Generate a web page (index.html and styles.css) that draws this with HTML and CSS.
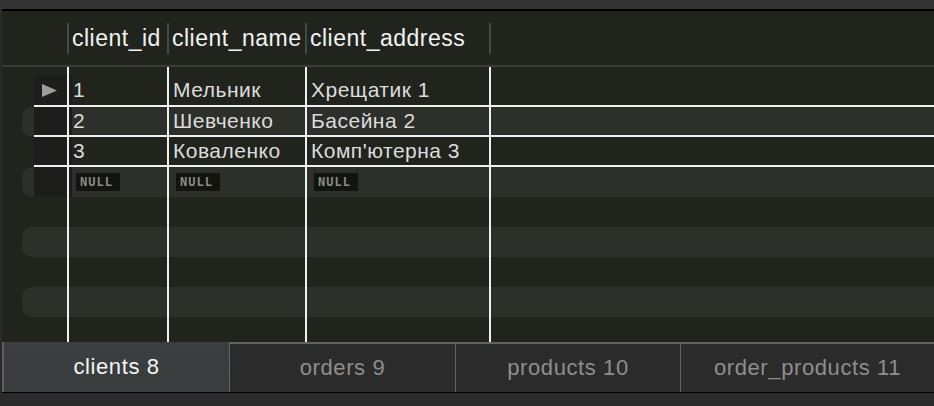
FILE: index.html
```html
<!DOCTYPE html>
<html lang="uk">
<head>
<meta charset="utf-8">
<title>clients</title>
<link rel="stylesheet" href="styles.css">
</head>
<body>
<div class="topbar"></div>
<div class="main">
  <div class="grid">
    <div class="head">
      <div class="hgut"></div>
      <div class="hind"></div>
      <div class="hc c1">client_id</div>
      <div class="hc c2">client_name</div>
      <div class="hc c3">client_address</div>
      <div class="hc rest"></div>
    </div>
    <div class="body">
      <div class="row spacer">
        <div class="gut"></div><div class="ind"></div>
        <div class="cell c1"></div><div class="cell c2"></div><div class="cell c3"></div><div class="cell rest"></div>
      </div>
      <div class="row first rec lined">
        <div class="gut"></div>
        <div class="ind"><svg class="arrow" width="15" height="13" viewBox="0 0 15 13"><path d="M0 0 L15 6.5 L0 13 Z" fill="#9d9d9d"/></svg></div>
        <div class="cell c1">1</div><div class="cell c2">Мельник</div><div class="cell c3">Хрещатик 1</div><div class="cell rest"></div>
      </div>
      <div class="row alt rec lined">
        <div class="gut"></div><div class="ind"></div>
        <div class="cell c1">2</div><div class="cell c2">Шевченко</div><div class="cell c3">Басейна 2</div><div class="cell rest"></div>
      </div>
      <div class="row rec lined">
        <div class="gut"></div><div class="ind"></div>
        <div class="cell c1">3</div><div class="cell c2">Коваленко</div><div class="cell c3">Комп'ютерна 3</div><div class="cell rest"></div>
      </div>
      <div class="row alt rec">
        <div class="gut"></div><div class="ind"></div>
        <div class="cell c1"><span class="null">NULL</span></div><div class="cell c2"><span class="null">NULL</span></div><div class="cell c3"><span class="null">NULL</span></div><div class="cell rest"></div>
      </div>
      <div class="row">
        <div class="gut"></div><div class="ind"></div>
        <div class="cell c1"></div><div class="cell c2"></div><div class="cell c3"></div><div class="cell rest"></div>
      </div>
      <div class="row alt">
        <div class="gut"></div><div class="ind"></div>
        <div class="cell c1"></div><div class="cell c2"></div><div class="cell c3"></div><div class="cell rest"></div>
      </div>
      <div class="row">
        <div class="gut"></div><div class="ind"></div>
        <div class="cell c1"></div><div class="cell c2"></div><div class="cell c3"></div><div class="cell rest"></div>
      </div>
      <div class="row alt">
        <div class="gut"></div><div class="ind"></div>
        <div class="cell c1"></div><div class="cell c2"></div><div class="cell c3"></div><div class="cell rest"></div>
      </div>
      <div class="row last">
        <div class="gut"></div><div class="ind"></div>
        <div class="cell c1"></div><div class="cell c2"></div><div class="cell c3"></div><div class="cell rest"></div>
      </div>
    </div>
  </div>
  <div class="tabs">
    <div class="tab active t1">clients 8</div>
    <div class="tab t2">orders 9</div>
    <div class="tab t3">products 10</div>
    <div class="tab t4">order_products 11</div>
  </div>
</div>
</body>
</html>
```

FILE: styles.css
```css
* { box-sizing: border-box; }
html, body { margin: 0; padding: 0; }
body {
  width: 934px;
  height: 406px;
  overflow: hidden;
  background: #2a2a2a;
  font-family: "Liberation Sans", Arial, sans-serif;
}
.topbar {
  height: 9px;
  background: #333333;
}
.main {
  margin-left: 2px;
  border-top: 2px solid #000;
  display: flex;
  flex-direction: column;
}
.grid {
  height: 331px;
  background: #20241d;
  display: flex;
  flex-direction: column;
}
.head {
  height: 56px;
  border-bottom: 2px solid #3a3d37;
  display: flex;
  align-items: flex-start;
}
.hgut { width: 32px; flex: none; }
.hind { width: 33px; flex: none; }
.hc {
  margin-top: 12px;
  height: 31px;
  line-height: 31px;
  border-left: 2px solid #464941;
  padding-left: 3px;
  color: #f2f2f2;
  font-size: 23px;
  letter-spacing: 0.5px;
  white-space: nowrap;
  flex: none;
}
.c1 { width: 100px; flex: none; }
.c2 { width: 138px; flex: none; }
.c3 { width: 184px; flex: none; }
.rest { flex: 1; }
.body {
  flex: 1;
  display: flex;
  flex-direction: column;
}
.row {
  margin-left: 20px;
  height: 30px;
  display: flex;
  flex: none;
}
.row.spacer { height: 8px; }
.row.first { height: 32px; }
.row.last { flex: 1; }
.row.alt {
  background: #2d2f2a;
  border-radius: 10px 0 0 10px;
}
.gut { width: 12px; flex: none; }
.ind {
  width: 33px;
  flex: none;
  display: flex;
  align-items: center;
  padding-left: 8px;
}
.cell {
  border-left: 2px solid #efefef;
  display: flex;
  align-items: center;
  padding-left: 4px;
  color: #dcdcdc;
  font-size: 21px;
  letter-spacing: 0.5px;
  white-space: nowrap;
}
.rest.cell { flex: 1; }
.rec .ind { background: #1d1e1b; }
.rec .c1 { background: linear-gradient(90deg, #1d1e1b 3px, transparent 3px); }
.lined .ind,
.lined .cell { border-bottom: 2px solid #efefef; }
.null {
  margin-left: 3px;
  display: inline-block;
  height: 18px;
  line-height: 18px;
  width: 44px;
  padding-left: 4px;
  background: #121410;
  color: #8a8c87;
  font-family: "DejaVu Sans Mono", monospace;
  font-weight: bold;
  font-size: 12px;
  letter-spacing: 1px;
}
.tabs {
  height: 51px;
  display: flex;
  border-bottom: 1px solid #000;
}
.tab {
  height: 50px;
  display: flex;
  align-items: center;
  justify-content: center;
  font-size: 22px;
  letter-spacing: 0.6px;
  color: #8e8e8e;
  background: #2b2b2b;
  border-top: 2px solid #63635f;
  border-left: 1px solid #63635f;
  white-space: nowrap;
  flex: none;
}
.tab.active {
  color: #f4f4f4;
  border-top: none;
  border-left: 2px solid #5f5f5b;
  background: linear-gradient(180deg, #3c3f41, #393c3d);
}
.t1 { width: 227px; }
.t2 { width: 226px; }
.t3 { width: 225px; }
.t4 { flex: 1; }
```
